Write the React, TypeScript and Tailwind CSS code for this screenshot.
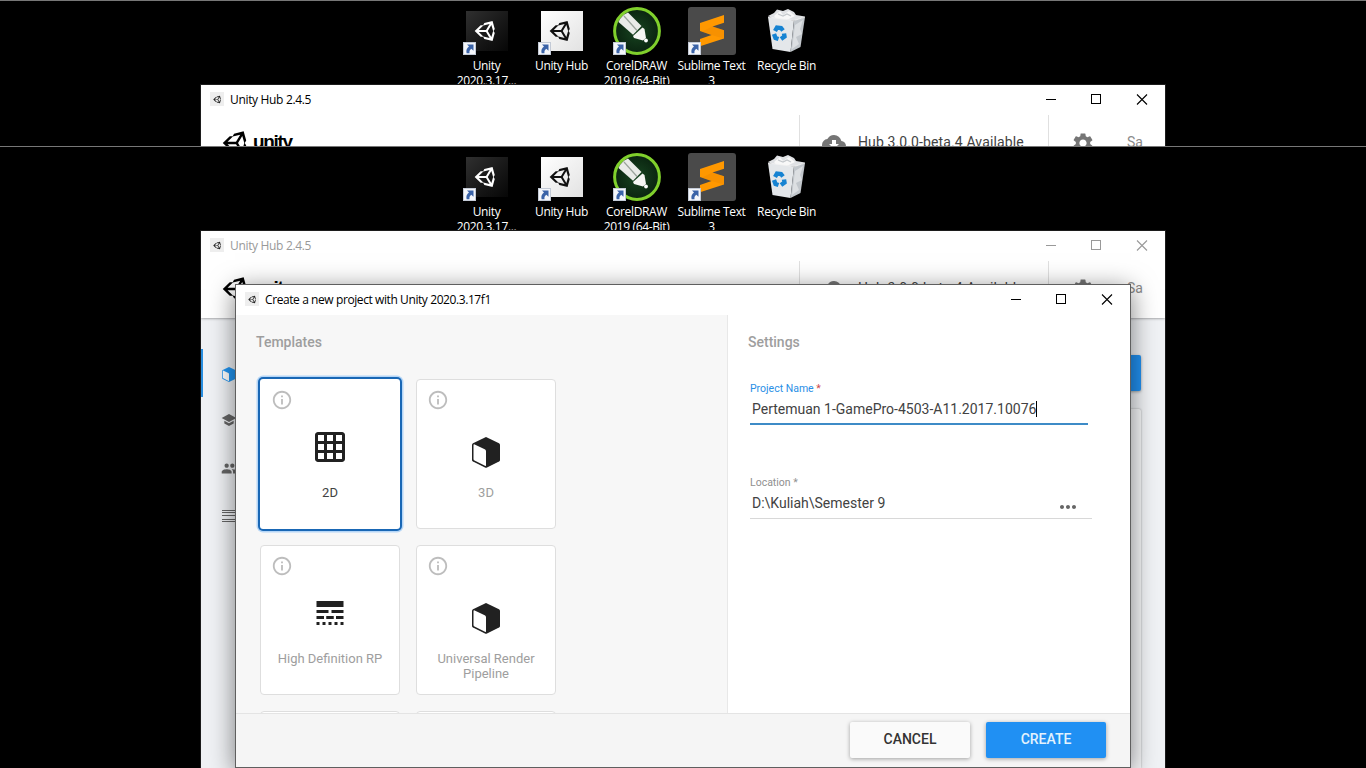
import React from "react";
import { FaUnity } from "react-icons/fa";
import {
  MdCloudDownload,
  MdGridOn,
  MdInfoOutline,
  MdLineStyle,
  MdMoreHoriz,
  MdPeople,
  MdSchool,
  MdSettings,
} from "react-icons/md";

const winFont = "font-['Open_Sans','Noto_Sans',sans-serif]";

function ShortcutArrow({ className }: { className: string }) {
  return (
    <svg className={`absolute ${className}`} width="13" height="13" viewBox="0 0 13 13">
      <rect width="13" height="13" fill="#f4f6fa" />
      <rect x="0.5" y="0.5" width="12" height="12" fill="none" stroke="#c3cad6" />
      <path d="M4 2.500h6.500v6.200L8.300 6.800C6.600 8 6.200 9.200 6.500 11.200H3.600C2.900 8.400 3.900 6.200 6 4.600z" fill="#3a63a8" />
    </svg>
  );
}

function UnityTile({ light }: { light?: boolean }) {
  return (
    <div className="flex h-12 shrink-0 items-center">
      <div
        className={
          light
            ? "relative flex h-10 w-[42px] items-center justify-center bg-linear-to-br from-white to-[#e2e2e2] text-[#111]"
            : "relative flex h-10 w-[42px] items-center justify-center bg-linear-to-br from-[#303030] to-[#070707] text-white"
        }
      >
        <FaUnity size={24} className="mr-px" />
        <ShortcutArrow className="bottom-[-4px] left-[-3px]" />
      </div>
    </div>
  );
}

function CorelIcon() {
  return (
    <div className="relative h-12 w-12 shrink-0">
      <svg width="48" height="48" viewBox="0 0 48 48">
        <defs>
          <radialGradient id="corel">
            <stop offset="0" stopColor="#174420" />
            <stop offset="1" stopColor="#0a2410" />
          </radialGradient>
        </defs>
        <circle cx="24" cy="24" r="22.400" fill="url(#corel)" stroke="#80d02c" strokeWidth="3" />
        <path d="M5.500 15Q8 8.500 15 5.500L28.500 19 20 27.800Z" fill="#e9ebe8" />
        <path d="m11 9 13 14.500" stroke="#9aa39b" strokeWidth="1.200" />
        <path d="M20 29 29.500 20.500 31.500 22 33 31 30 33.500 21 31Z" fill="#f6f6f4" />
        <circle cx="33" cy="33.500" r="1.900" fill="#fff" />
      </svg>
      <ShortcutArrow className="bottom-0 left-0" />
    </div>
  );
}

function SublimeIcon() {
  return (
    <div className="relative h-12 w-12 shrink-0">
      <svg width="48" height="48" viewBox="0 0 48 48">
        <rect width="48" height="48" rx="3" fill="#4a4a4a" />
        <path
          d="M12 16 36 8V15.700L24.500 19.600 36 23.300V31.500L12 39.300V32L23.500 28 12 24Z"
          fill="#ff9800"
        />
        <path d="M24.500 19.600 36 23.300V31.500L23.500 28 14 24.500Z" fill="#e88400" opacity=".35" />
      </svg>
      <ShortcutArrow className="bottom-0 left-0" />
    </div>
  );
}

function RecycleBinIcon() {
  return (
    <svg className="shrink-0" width="48" height="48" viewBox="0 0 48 48">
      <path d="M5 9 11 6 14 2.500 20 4 25 2 31 5 33 8 42 9.500 36 13H14Z" fill="#dfe1e4" />
      <path d="m11 9 6-5 3 4 6-4 6 5-6 3-12 1Z" fill="#f8f8f8" />
      <path d="m15 7 5 2 4-2 4 2" fill="none" stroke="#c4c8cc" strokeWidth="1.200" />
      <path d="M5 10 31 13.500 27.500 45 9.500 42Z" fill="#e4e7ea" />
      <path d="M31 13.500 42 10 37.500 40 27.500 45Z" fill="#c2c7cc" />
      <path d="M32 18 40 13 37 22 39 27 33 30 36 37 29 42Z" fill="#dcdfe2" />
      <path d="M5 10l26 3.500L42 10" fill="none" stroke="#f4f4f4" strokeWidth="0.8" />
      <g fill="none" stroke="#1683d2" strokeWidth="4.400">
        <path d="m12 24 2-3.500 4 .5 2 2.500" />
        <path d="m21 26.500.5 3-3.500 2.500" />
        <path d="m15.500 32-3-1-1.500-4" />
      </g>
    </svg>
  );
}

const shortcuts = [
  { icon: <UnityTile />, first: "Unity", second: "2020.3.17..." },
  { icon: <UnityTile light />, first: "Unity Hub", second: "" },
  { icon: <CorelIcon />, first: "CorelDRAW", second: "2019 (64-Bit)" },
  { icon: <SublimeIcon />, first: "Sublime Text", second: "3" },
  { icon: <RecycleBinIcon />, first: "Recycle Bin", second: "" },
];

function DesktopIcons() {
  return (
    <div className="flex h-[84px] shrink-0 overflow-hidden border-t border-[#777] pl-[449px]">
      {shortcuts.map((s) => (
        <div key={s.first} className="flex w-[75px] shrink-0 flex-col items-center pt-1.5">
          {s.icon}
          <div className={`${winFont} mt-[3px] shrink-0 text-center text-[12px] leading-[15px] tracking-[-0.35px] whitespace-nowrap text-white`}>
            <div>{s.first}</div>
            <div>{s.second}</div>
          </div>
        </div>
      ))}
    </div>
  );
}

function WindowControls() {
  return (
    <svg className="ml-auto shrink-0" width="104" height="12" viewBox="0 0 104 12" fill="none" stroke="currentColor" shapeRendering="crispEdges">
      <path d="M0 6.500h10" />
      <path d="M45.500 1.500h9v9h-9z" />
      <path d="m91 1.500 10 10m0-10-10 10" shapeRendering="auto" strokeWidth="1.100" />
    </svg>
  );
}

function TitleIcon() {
  return (
    <span className="flex h-3.5 w-3.5 items-center justify-center bg-[#eee] text-[#222]">
      <FaUnity size={9} />
    </span>
  );
}

function HubWindow({ inactive, children }: { inactive?: boolean; children?: React.ReactNode }) {
  return (
    <div className="relative ml-[200px] flex w-[966px] flex-1 flex-col overflow-hidden border border-b-0 border-[#1c1c1c] bg-white">
      <div className={`${winFont} relative z-20 flex h-[30px] shrink-0 items-center bg-white pr-[15px] pb-0.5 pl-[9px] text-[12px] ${inactive ? "text-[#999]" : "text-black"}`}>
        <TitleIcon />
        <span className="ml-1.5 pt-0.5 tracking-[-0.33px]">Unity Hub 2.4.5</span>
        <WindowControls />
      </div>
      <div className="relative z-10 flex h-[57px] shrink-0 bg-white font-[Roboto,sans-serif] shadow-[0_0_3px_rgba(0,0,0,0.55)]">
        <div className="flex w-[598px] shrink-0 items-start pt-3.5 pl-[21px] text-black">
          <FaUnity size={28} />
          <span className="mt-px ml-[3px] font-['Liberation_Sans',sans-serif] text-[19px] leading-6 font-bold tracking-[-1.3px]">unity</span>
        </div>
        <div className="flex w-[249px] shrink-0 border-l border-[#e0e0e0] pt-4 pl-[22px]">
          <MdCloudDownload size={24} className="text-[#757575]" />
          <span className="ml-3 text-[14px] leading-[22px] tracking-[0.12px] text-[#424242]">Hub 3.0.0-beta.4 Available</span>
        </div>
        <div className="flex flex-1 border-l border-[#e0e0e0] pt-4 pl-[22px]">
          <MdSettings size={24} className="text-[#757575]" />
          <span className="ml-8 text-[14px] leading-[22px] text-[#8a8a8a]">Sa</span>
        </div>
      </div>
      {children}
    </div>
  );
}

function Cube({ className }: { className?: string }) {
  return (
    <svg className={className} viewBox="0 0 28 31">
      <path d="M14 0 27 6.300Q28 6.900 28 8V23Q28 24 27 24.600L15 30.600Q14 31.100 13 30.600L1 24.600Q0 24 0 23V8Q0 6.900 1 6.300Z" fill="currentColor" />
      <path d="M1.500 8.200Q1.500 6.900 2.700 7.500L12.700 12.200Q14 12.900 14 14.200V28.200Q14 29.300 13 28.700L2.500 23.500Q1.500 23 1.500 22Z" fill="#fff" />
    </svg>
  );
}

function LinesIcon() {
  return (
    <svg width="16" height="12" viewBox="0 0 16 12" fill="none" stroke="#666">
      <path d="M0 .5h16M0 2.500h16M0 5.500h16M0 9.500h16M0 11.500h16" />
    </svg>
  );
}

function HubBody() {
  return (
    <div className="flex flex-1 bg-[#f0f2f5]">
      <div className="flex w-[60px] flex-col pt-[31px] text-[#666]">
        <div className="flex h-12 items-center border-l-2 border-[#2a8fe0] pt-0.5 pl-[19px] text-[#2196f3]">
          <Cube className="h-[15px] w-[14px]" />
        </div>
        <div className="flex h-12 items-center pb-0.5 pl-5"><MdSchool size={16} /></div>
        <div className="flex h-12 items-center pb-0.5 pl-5"><MdPeople size={17} /></div>
        <div className="flex h-12 items-center pb-0.5 pl-[21px]"><LinesIcon /></div>
      </div>
      <div className="mr-[24px] flex flex-1 flex-col items-end pt-[37px]">
        <div className="h-9 w-32 rounded-xs bg-[#2190f0] shadow-[0_1px_3px_rgba(0,0,0,0.35)]" />
        <div className="mt-[18px] w-full flex-1 rounded-t-xs bg-[#f6f7f9] shadow-[0_0_2px_rgba(0,0,0,0.35)]" />
      </div>
    </div>
  );
}

type TemplateProps = { label: string; icon: React.ReactNode; offset?: boolean; selected?: boolean };

function TemplateCard({ label, icon, offset, selected }: TemplateProps) {
  return (
    <div
      className={
        selected
          ? "flex h-[150px] w-[140px] flex-col items-center rounded-[3px] bg-white pt-2.5 shadow-[0_0_0_2px_#1967b5,0_0_0_3.5px_#b5d6f7]"
          : "flex h-[150px] w-[140px] flex-col items-center rounded-[4px] border border-[#dedede] bg-white pt-[9px]"
      }
    >
      <MdInfoOutline size={22} className="mr-[96px] shrink-0 text-[#bdbdbd]" />
      <div className={`mt-[18px] flex h-9 shrink-0 items-center text-[#212121] ${offset ? "relative top-[5px]" : ""}`}>{icon}</div>
      <div className={`mt-5 w-[124px] text-center text-[13px] leading-[15px] ${selected ? "text-[#424242]" : "text-[#9e9e9e]"}`}>{label}</div>
    </div>
  );
}

function CreateDialog() {
  return (
    <div className="absolute top-[138px] left-[235px] z-20 flex h-[484px] w-[896px] flex-col border border-[#5f5f5f] bg-white shadow-[0_5px_24px_rgba(0,0,0,0.5)]">
      <div className={`${winFont} flex h-[30px] shrink-0 items-center pr-[15px] pb-0.5 pl-[9px] text-[12px] text-black`}>
        <TitleIcon />
        <span className="ml-1.5 pt-0.5 tracking-[-0.41px]">Create a new project with Unity 2020.3.17f1</span>
        <WindowControls />
      </div>
      <div className="flex h-[398px] shrink-0 font-[Roboto,sans-serif]">
        <div className="w-[492px] shrink-0 overflow-hidden border-r border-[#e8e8e8] bg-[#f7f7f7]">
          <h2 className="mt-[18px] ml-5 text-[14px] leading-[18px] font-medium text-[#9e9e9e]">Templates</h2>
          <div className="mt-7 ml-6 grid w-[296px] grid-cols-2 gap-4">
            <TemplateCard selected label="2D" icon={<MdGridOn size={36} />} />
            <TemplateCard label="3D" offset icon={<Cube className="h-[31px] w-7" />} />
            <TemplateCard label="High Definition RP" icon={<MdLineStyle size={36} />} />
            <TemplateCard label="Universal Render Pipeline" offset icon={<Cube className="h-[31px] w-7" />} />
            <div className="h-[150px] rounded-[4px] border border-[#dedede] bg-white" />
            <div className="h-[150px] rounded-[4px] border border-[#dedede] bg-white" />
          </div>
        </div>
        <div className="flex-1 pt-[18px] pl-5">
          <h2 className="text-[14px] leading-[18px] font-medium text-[#9e9e9e]">Settings</h2>
          <div className="mt-[31px] ml-0.5 w-[338px] border-b-2 border-[#3d8bc7]">
            <div className="text-[10.5px] leading-[14px] text-[#2a8fe6]">Project Name <span className="text-[#d04848]">*</span></div>
            <div className="flex h-[27px] items-center pb-px pl-0.5 text-[14px] text-[#424242]">
              <span>Pertemuan 1-GamePro-4503-A11.2017.10076</span>
              <span className="h-4 w-px bg-black" />
            </div>
          </div>
          <div className="mt-[51px] ml-0.5 w-[342px] border-b border-[#d8d8d8]">
            <div className="text-[10.5px] leading-[14px] text-[#8f8f8f]">Location *</div>
            <div className="flex h-7 items-center pr-3 pb-px pl-0.5 text-[14px] text-[#424242]">
              <span>D:\Kuliah\Semester 9</span>
              <MdMoreHoriz size={24} className="mt-1.5 ml-auto text-[#666]" />
            </div>
          </div>
        </div>
      </div>
      <div className="flex flex-1 justify-end gap-4 border-t border-[#e4e4e4] bg-[#f5f5f5] pt-2 pr-6 font-[Roboto,sans-serif] text-[14px] font-medium">
        <button className="h-9 w-[120px] rounded-xs bg-[#fafafa] pb-0.5 text-[#333] shadow-[0_1px_4px_rgba(0,0,0,0.35)]">CANCEL</button>
        <button className="h-9 w-[120px] rounded-xs bg-[#2090f3] pb-0.5 text-[#e3f2fd] shadow-[0_1px_4px_rgba(0,0,0,0.35)]">CREATE</button>
      </div>
    </div>
  );
}

export default function App() {
  return (
    <div className="flex h-[768px] w-[1366px] flex-col overflow-hidden bg-black">
      <section className="flex h-[146px] shrink-0 flex-col overflow-hidden">
        <DesktopIcons />
        <HubWindow />
      </section>
      <section className="relative flex h-[622px] shrink-0 flex-col overflow-hidden">
        <DesktopIcons />
        <HubWindow inactive>
          <HubBody />
        </HubWindow>
        <CreateDialog />
      </section>
    </div>
  );
}
